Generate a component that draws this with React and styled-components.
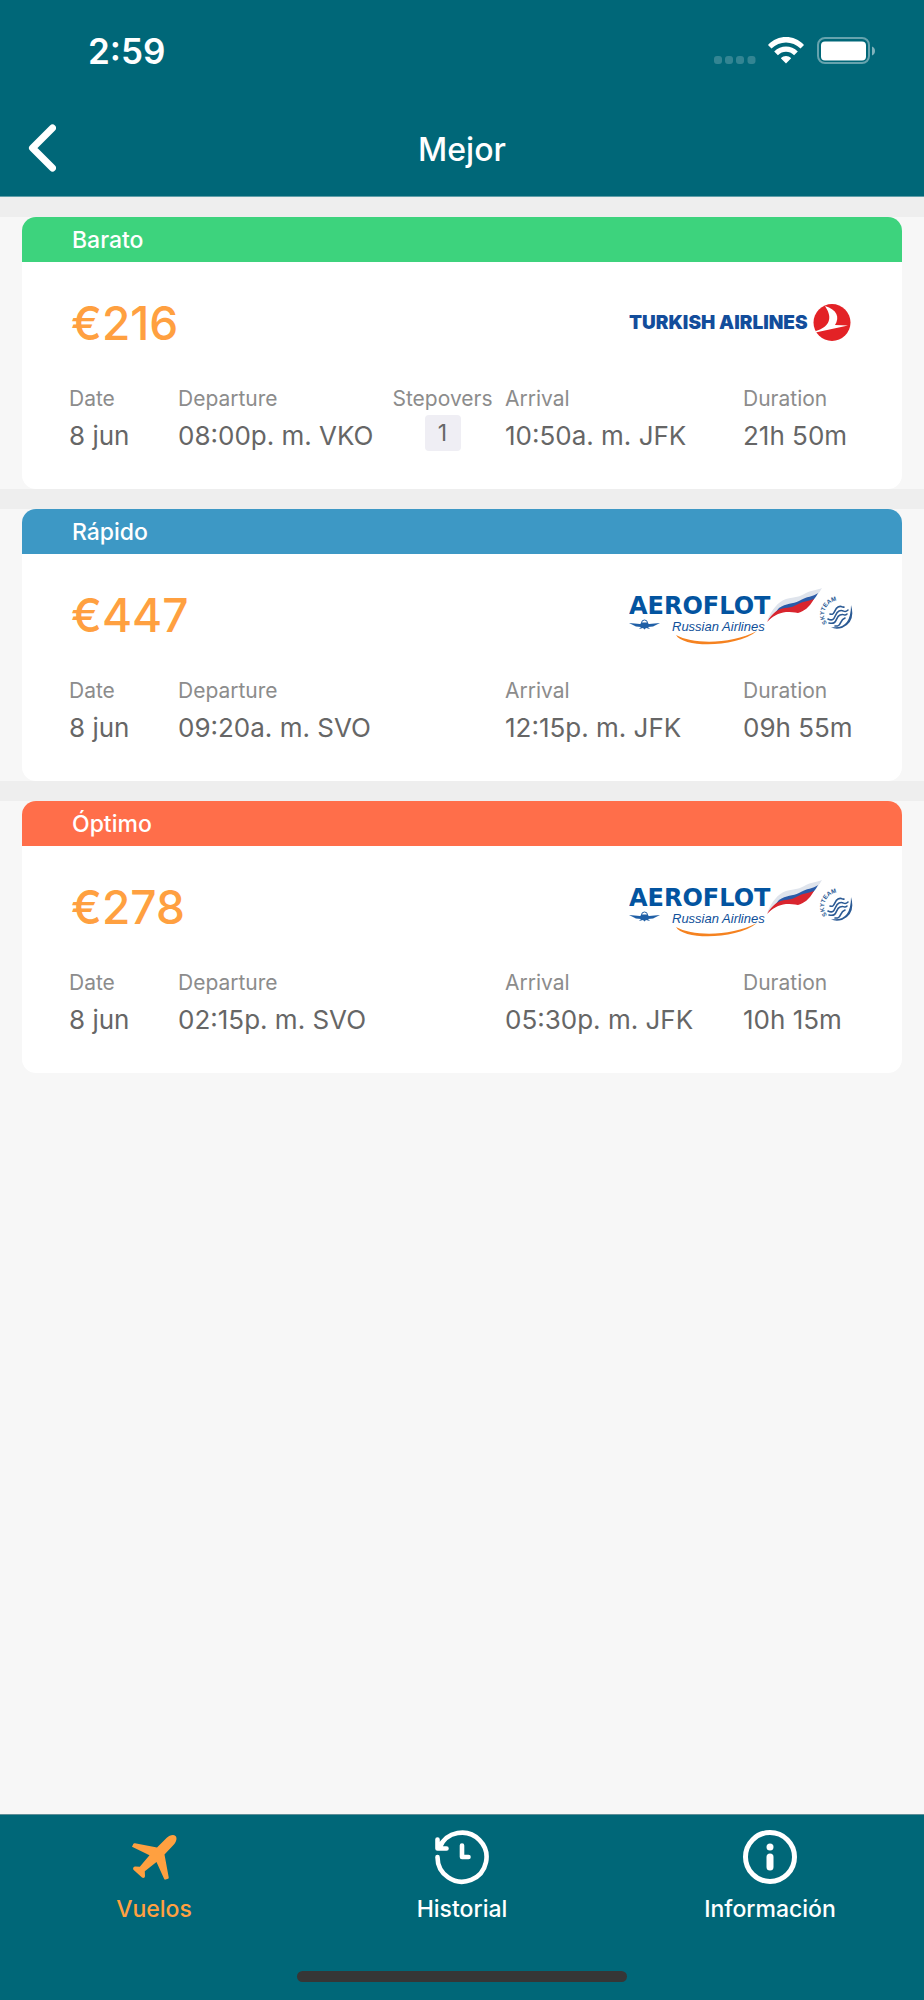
import React from 'react';
import styled, { createGlobalStyle } from 'styled-components';

const GlobalStyle = createGlobalStyle`
  * {
    box-sizing: border-box;
  }
  body {
    margin: 0;
    background: #f7f7f7;
    font-family: Inter, "Liberation Sans", sans-serif;
  }
  button {
    padding: 0;
    border: 0;
    background: transparent;
    font-family: inherit;
    cursor: pointer;
  }
`;

const Screen = styled.div`
  display: flex;
  flex-direction: column;
  min-height: 100vh;
`;

const Header = styled.header`
  background: #006778;
  color: #fff;
  border-bottom: 1px solid #5f9ea8;
`;

const StatusBar = styled.div`
  display: flex;
  align-items: center;
  justify-content: space-between;
  height: 100px;
  padding: 0 48px 0 88px;
`;

const Clock = styled.time`
  padding-top: 2px;
  font-size: 35px;
  line-height: 40px;
  font-weight: 600;
`;

const NavBar = styled.div`
  display: grid;
  grid-template-columns: 80px 1fr 80px;
  align-items: center;
  height: 96px;
`;

const BackButton = styled.button`
  display: flex;
  padding-left: 28px;
`;

const Title = styled.h1`
  margin: 0;
  padding-top: 4px;
  font-size: 32px;
  line-height: 40px;
  font-weight: 500;
  text-align: center;
`;

const Flights = styled.main`
  flex: 1;
`;

const FlightRow = styled.section`
  padding: 0 22px;
  border-top: 20px solid #eee;
`;

const Card = styled.article`
  overflow: hidden;
  border-radius: 14px;
  background: #fff;
`;

const CardTitle = styled.h2`
  margin: 0;
  padding: 1px 50px 0;
  background: ${props => props.$color};
  color: #fff;
  font-size: 23px;
  line-height: 44px;
  font-weight: 500;
`;

const CardBody = styled.div`
  padding: 23px 40px 32px 47px;
`;

const Offer = styled.div`
  display: flex;
  align-items: center;
  justify-content: space-between;
  height: 76px;
  padding: 0 9px 0 2px;
`;

const Price = styled.strong`
  color: #ffa040;
  font-size: 46px;
  line-height: 56px;
  font-weight: 500;
`;

const Details = styled.dl`
  display: grid;
  grid-template-columns: 109px 208px 119px 238px 1fr;
  margin: 24px 0 0;
`;

const Detail = styled.div`
  height: 72px;
  white-space: nowrap;
`;

const StopsDetail = styled(Detail)`
  padding-right: 6px;
  text-align: center;
`;

const Label = styled.dt`
  color: #8c8c8c;
  font-size: 21px;
  line-height: 28px;
`;

const Value = styled.dd`
  margin: 7px 0 0;
  color: #666;
  font-size: 26px;
  line-height: 32px;
`;

const Stops = styled.dd`
  display: inline-block;
  margin: 2px 0 0;
  width: 36px;
  border-radius: 4px;
  background: #efeef4;
  color: #666;
  font-size: 23px;
  line-height: 36px;
`;

const TabBar = styled.nav`
  display: grid;
  grid-template-columns: repeat(3, 1fr);
  border-top: 1px solid #5f8f98;
  background: #006778;
`;

const Tab = styled.button`
  display: flex;
  flex-direction: column;
  align-items: center;
  gap: 10px;
  height: 156px;
  padding-top: 14px;
  color: ${props => (props.$active ? '#ffa040' : '#fff')};
  font-size: 23px;
  line-height: 28px;
  font-weight: 500;
`;

const HomeArea = styled.div`
  display: flex;
  justify-content: center;
  height: 29px;
  background: #006778;
`;

const HomeIndicator = styled.div`
  width: 330px;
  height: 11px;
  border-radius: 6px;
  background: #363636;
`;

const StatusIcons = () => (
  <svg width="164" height="32" viewBox="0 0 164 32" aria-hidden="true">
    <g fill="#fff" fillOpacity="0.2">
      <rect x="2" y="22" width="8" height="8" rx="3" />
      <rect x="13" y="22" width="8" height="8" rx="3" />
      <rect x="24" y="22" width="8" height="8" rx="3" />
      <rect x="35.500" y="22" width="8" height="8" rx="3" />
    </g>
    <path fill="#fff" d="M56 11C66 .4 82 .4 92 11l-3.500 3.500c-8-8-21-8-29 0zM62.200 17.500c6.600-6.800 17-6.800 23.600 0l-3.700 3.700c-4.600-4.600-11.600-4.600-16.200 0zM68.800 24.200c3-2.900 7.400-2.900 10.400 0L74 29.500z" />
    <rect x="106" y="4" width="51" height="25" rx="7" fill="none" stroke="#fff" strokeOpacity="0.4" strokeWidth="2" />
    <rect x="109" y="7.500" width="45" height="19" rx="4" fill="#fff" />
    <path d="M160 12.500c4 1.500 4 7.500 0 9z" fill="#fff" fillOpacity="0.5" />
  </svg>
);

const ChevronIcon = () => (
  <svg width="28" height="48" viewBox="0 0 28 48" fill="none" stroke="#fff" strokeWidth="7" strokeLinecap="round" strokeLinejoin="round" aria-hidden="true">
    <path d="M24.500 4L4.500 24L24.500 44" />
  </svg>
);

const PlaneIcon = () => (
  <svg width="56" height="56" viewBox="0 0 56 56" fill="currentColor" aria-hidden="true">
    <path d="M49.500 7c-2-2-6-.8-9 2L31 18.500 9 14.200c-.8-.2-1.400.1-1.700.8L6 17.800l17.500 8.500-9.700 11.500-4.400-.4c-2.200 0-2.900 2.300-1.700 3.600l8.300 7.500c1.500 1 3 .1 3-1.500l-.2-4.700L30.500 33l7.700 17c.3.600.8.800 1.400.6l2.400-.8c.7-.3.800-.8.700-1.500L38.500 25.500l9.200-9.700c2.600-3 3.800-6.700 1.800-8.800z" />
  </svg>
);

const HistoryIcon = () => (
  <svg width="56" height="56" viewBox="0 0 56 56" fill="none" stroke="currentColor" strokeWidth="4.600" strokeLinecap="round" strokeLinejoin="round" aria-hidden="true">
    <path d="M3.500 28A24.500 24.500 0 1 0 5.500 18.500M3.500 10.500V19.500H12.500M28 16.500V28H34.500" />
  </svg>
);

const InfoIcon = () => (
  <svg width="56" height="56" viewBox="0 0 56 56" fill="none" stroke="currentColor" aria-hidden="true">
    <circle cx="28" cy="28" r="24.500" strokeWidth="5" />
    <circle cx="28" cy="18" r="3.500" fill="currentColor" stroke="none" />
    <path d="M28 28v10" strokeWidth="7" strokeLinecap="round" />
  </svg>
);

const TurkishLogo = () => (
  <svg width="224" height="60" viewBox="0 0 224 60" role="img" aria-label="Turkish Airlines">
    <text x="0" y="36" fill="#134d9b" fontFamily="Inter, sans-serif" fontSize="19" fontWeight="900">TURKISH AIRLINES</text>
    <circle cx="203" cy="29.500" r="18.500" fill="#e32226" />
    <path fill="#fff" d="M196 13C208 16.500 211 24.500 206 32L219 32.500 186.500 39.500 187 38C199 34.500 203.500 26.500 198 16.500z" />
  </svg>
);

const AeroflotLogo = () => (
  <svg width="224" height="60" viewBox="0 0 224 60" role="img" aria-label="Aeroflot Russian Airlines">
    <text x="0" y="29" fill="#0354a0" fontFamily="DejaVu Sans, sans-serif" fontSize="24" fontWeight="700">AEROFLOT</text>
    <text x="43" y="46" fill="#0f4f99" fontFamily="Liberation Sans, sans-serif" fontSize="13" fontStyle="italic">Russian Airlines</text>
    <path fill="#1f5fa6" d="M0 38l11 1 2-1.500h5L20 39l11-1-7 3.500-5 .5 2 2-4-1-1.500 1.500L14 43l-4 1 2-2-5-.5z" />
    <circle cx="15.500" cy="38" r="3" fill="none" stroke="#1f5fa6" />
    <path fill="#f58220" d="M47 50c18 10 56 9 81-4-21 17-74 17-81 4z" />
    <path fill="#dfe4ec" d="M138 36c5-12 11-19 19-22 9-2 14-2 20-6 6-3 11-3 16-5-6 11-12 15-23 16-12 3-20 5-32 17z" />
    <path fill="#2a5ba8" d="M150 23c7-5 14-4 20-7 8-5 14-4 19-8-5 10-11 13-22 15-10 2-19 3-26 11z" />
    <path fill="#d9252e" d="M138 37c5-9 11-13 18-14 8 0 12-4 18-6 5-1 8-2 11-3-5 9-10 12-16 14-4-1-7-1-12-1-8 1-13 4-19 10z" />
    <path fill="#2b5a94" d="M222 20q5 17-9 23-7 2-11-1 20 3 20-22z" />
    <path d="M199 34c8 4 6-6 11-8s5 3 9-1M200 38c9 2 6-6 11-8s4 2 7-1M206 41c7 1 4-6 10-8M201 29c5 2 4-5 8-7s4 1 6 0" fill="none" stroke="#2b5a94" strokeWidth="1.600" strokeLinecap="round" />
    <path id="skyteam" d="M198 38A13 13 0 0 1 220 21" fill="none" />
    <text fill="#2b5a94" fontFamily="Liberation Sans, sans-serif" fontSize="6" fontWeight="700">
      <textPath href="#skyteam">SKYTEAM</textPath>
    </text>
  </svg>
);

const flights = [
  { title: 'Barato', color: '#3dd37d', price: '€216', logo: TurkishLogo, departure: '08:00p. m. VKO', stops: 1, arrival: '10:50a. m. JFK', duration: '21h 50m' },
  { title: 'Rápido', color: '#3d98c5', price: '€447', logo: AeroflotLogo, departure: '09:20a. m. SVO', arrival: '12:15p. m. JFK', duration: '09h 55m' },
  { title: 'Óptimo', color: '#ff6e4a', price: '€278', logo: AeroflotLogo, departure: '02:15p. m. SVO', arrival: '05:30p. m. JFK', duration: '10h 15m' },
];

const Flight = ({ flight }) => {
  const Logo = flight.logo;
  return (
    <FlightRow>
      <Card>
        <CardTitle $color={flight.color}>{flight.title}</CardTitle>
        <CardBody>
          <Offer>
            <Price>{flight.price}</Price>
            <Logo />
          </Offer>
          <Details>
            <Detail>
              <Label>Date</Label>
              <Value>8 jun</Value>
            </Detail>
            <Detail>
              <Label>Departure</Label>
              <Value>{flight.departure}</Value>
            </Detail>
            <StopsDetail>
              {flight.stops && <Label>Stepovers</Label>}
              {flight.stops && <Stops>{flight.stops}</Stops>}
            </StopsDetail>
            <Detail>
              <Label>Arrival</Label>
              <Value>{flight.arrival}</Value>
            </Detail>
            <Detail>
              <Label>Duration</Label>
              <Value>{flight.duration}</Value>
            </Detail>
          </Details>
        </CardBody>
      </Card>
    </FlightRow>
  );
};

const App = () => (
  <Screen>
    <GlobalStyle />
    <Header>
      <StatusBar>
        <Clock>2:59</Clock>
        <StatusIcons />
      </StatusBar>
      <NavBar>
        <BackButton aria-label="Back"><ChevronIcon /></BackButton>
        <Title>Mejor</Title>
      </NavBar>
    </Header>
    <Flights>
      {flights.map(flight => <Flight key={flight.title} flight={flight} />)}
    </Flights>
    <TabBar>
      <Tab $active><PlaneIcon />Vuelos</Tab>
      <Tab><HistoryIcon />Historial</Tab>
      <Tab><InfoIcon />Información</Tab>
    </TabBar>
    <HomeArea>
      <HomeIndicator />
    </HomeArea>
  </Screen>
);

export default App;
